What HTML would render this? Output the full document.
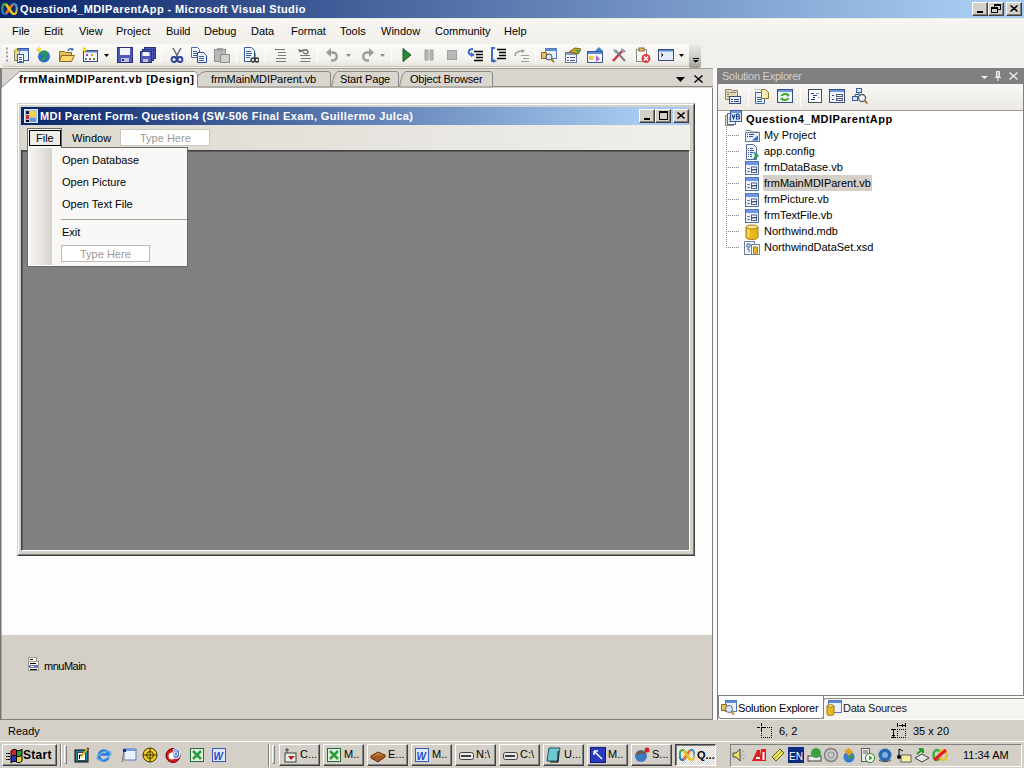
<!DOCTYPE html>
<html><head><meta charset="utf-8">
<style>
*{margin:0;padding:0;box-sizing:border-box}
html,body{width:1024px;height:768px;overflow:hidden;background:#d4d0c8;font-family:"Liberation Sans",sans-serif;font-size:11px;color:#000}
.a{position:absolute}
.nw{white-space:nowrap}
svg{position:absolute;overflow:visible}
#title{left:0;top:0;width:1024px;height:18px;background:linear-gradient(90deg,#0a246a 0px,#a6caf0 968px,#a6caf0 100%)}
#title .t{left:20px;top:3px;color:#fff;font-weight:bold;font-size:11px;letter-spacing:0.38px;white-space:nowrap}
.wb{position:absolute;width:16px;height:14px;background:#d4d0c8;border:1px solid;border-color:#fff #404040 #404040 #fff;box-shadow:inset -1px -1px #808080}
#menubar{left:0;top:18px;width:1024px;height:25px;background:linear-gradient(180deg,#f7f6f2 0%,#f0efea 100%);border-top:1px solid #e8eee0}
#menubar span{position:absolute;top:6px}
#toolbar{left:0;top:43px;width:1024px;height:25px;background:#f1f0ec}
#tb{left:2px;top:1px;width:698px;height:23px;background:linear-gradient(180deg,#fbfaf8 0%,#f3f2ee 70%,#e6e4dc 100%);border-radius:3px;border-bottom:1px solid #c8c6bc}
.sep{position:absolute;top:4px;width:1px;height:16px;background:#c5c2b8;border-right:1px solid #fff}
#tabs{left:0;top:68px;width:713px;height:20px}
.tab{position:absolute;top:3px;height:17px;background:#d9d6cf;border:1px solid #a09c94;border-bottom:none;border-radius:6px 2px 0 0;padding-left:13px;line-height:15px;white-space:nowrap}
#doc{left:0;top:88px;width:713px;height:547px;background:#fefefe;border-left:1px solid #727272;box-shadow:inset 1px 0 #b8b8b8;border-right:1px solid #808080}
#tray{left:0;top:635px;width:713px;height:85px;background:#d4d0c8;border-left:1px solid #727272;box-shadow:inset 1px 0 #a8a6a0;border-right:1px solid #808080;border-bottom:1px solid #808080}
#status{left:0;top:720px;width:1024px;height:21px;background:#d4d0c8}
#taskbar{left:0;top:741px;width:1024px;height:27px;background:#d4d0c8;border-top:1px solid #fff}
#gap{left:713px;top:68px;width:4px;height:652px;background:#fafafa}
#se{left:717px;top:68px;width:307px;height:652px;background:#fff;border-left:1px solid #808080;border-right:1px solid #808080}
#sehdr{left:-1px;top:0;width:307px;height:16px;background:#808080;color:#d4d0c8}
#setb{left:0;top:16px;width:305px;height:27px;background:linear-gradient(180deg,#f9f8f5,#ebe9e2);border-bottom:1px solid #a09c94}
.btn{background:#d4d0c8;border:1px solid;border-color:#fff #404040 #404040 #fff;box-shadow:inset -1px -1px #808080}
.tree span{position:absolute;white-space:nowrap}
</style></head><body>
<svg width="0" height="0" style="position:absolute">
<defs>
<symbol id="i-form" viewBox="0 0 16 16">
 <rect x="1.5" y="1.5" width="13" height="13" fill="#eef2fa" stroke="#5573ad"/>
 <rect x="2" y="2" width="12" height="3" fill="#6e9be6"/>
 <path d="M3.5 8.5h2M3.5 11.5h2" stroke="#3a4a70"/>
 <rect x="7.5" y="7" width="5" height="2.5" fill="#fff" stroke="#4a5a80"/>
 <rect x="7.5" y="10" width="5" height="2.5" fill="#fff" stroke="#4a5a80"/>
</symbol>
<symbol id="i-myproj" viewBox="0 0 16 16">
 <path d="M1.5 2.5h5l1 1.5h7v1" fill="none" stroke="#7a8090"/>
 <rect x="1.5" y="4.5" width="14" height="9" fill="#e6ecf6" stroke="#6a7690"/>
 <path d="M3 6.5h1M5 6.5h5M3 8.5h1M5 8.5h4" stroke="#3050a0"/>
 <path d="M8 12.5l6-5v5z" fill="#3a60c0"/>
</symbol>
<symbol id="i-config" viewBox="0 0 16 16">
 <path d="M2.5 0.5h7l3 3v12h-10z" fill="#f2f5fb" stroke="#5a6a9a"/>
 <path d="M4 4.5h1M6 4.5h3M4 6.5h1M6 6.5h4M4 8.5h1M6 8.5h3M4 10.5h1M6 10.5h2M4 12.5h1M6 12.5h2" stroke="#3a5aa0"/>
 <path d="M9 8h3l3 3.5-3 3.5h-3l2-3.5z" fill="#2a9a5a"/>
 <path d="M9.5 8.5h2l2.5 3" stroke="#5ac0e0" fill="none"/>
</symbol>
<symbol id="i-mdb" viewBox="0 0 16 16">
 <path d="M2 3v10c0 1.7 2.7 2.5 6 2.5s6-.8 6-2.5V3z" fill="#e8b820" stroke="#a07a10"/>
 <ellipse cx="8" cy="3" rx="6" ry="2" fill="#f8e890" stroke="#a07a10"/>
 <rect x="3" y="5" width="3" height="8" fill="#f5d860" opacity=".8"/>
</symbol>
<symbol id="i-xsd" viewBox="0 0 16 16">
 <rect x="0.5" y="1.5" width="10" height="13" fill="#f4f6fa" stroke="#7080a0"/>
 <path d="M3 4h3v3H3zM3 9h2v3" fill="none" stroke="#3060b0"/>
 <rect x="7.5" y="4.5" width="8" height="10" fill="#fff" stroke="#7080a0"/>
 <path d="M9.5 7v6c0 .8 1 1 2 1s2-.2 2-1V7z" fill="#e8b820" stroke="#a07a10"/>
</symbol>
<symbol id="i-vbproj" viewBox="0 0 17 16">
 <rect x="0.5" y="5.5" width="8" height="10" fill="#dcd8c8" stroke="#8a8878"/>
 <rect x="2.5" y="3.5" width="8" height="11" fill="#eef2fa" stroke="#5a6ea0"/>
 <path d="M4 7.5h4M4 9.5h4M4 11.5h4" stroke="#6a80b0"/>
 <rect x="5.5" y="0.5" width="11" height="11" fill="#dce8fa" stroke="#3a5a9a"/>
 <rect x="6" y="1" width="10" height="2" fill="#6a9ae0"/>
 <path d="M7 4.5l1.5 4 1.5-4" stroke="#1a3a8a" fill="none" stroke-width="1.2"/>
 <path d="M11.5 4v5h2c1.5 0 1.5-2.5 0-2.5h-2M11.5 6.5h1.8c1.2 0 1.2-2.5 0-2.5h-1.8" stroke="#1a3a8a" fill="none" stroke-width="1.1"/>
</symbol>
<symbol id="i-ql1" viewBox="0 0 16 16"><rect x="1" y="3" width="13" height="12" fill="#2a8a9a" stroke="#000"/><rect x="3.5" y="5.5" width="8" height="8" fill="#fff" stroke="#404040"/><path d="M5.5 12V8h3" stroke="#000" fill="none"/><path d="M7 10l7-9" stroke="#e8b020" stroke-width="2"/><path d="M13 1l2 1" stroke="#000"/></symbol>
<symbol id="i-ql2" viewBox="0 0 16 16"><path d="M12.5 10.5A5 5 0 1 1 12.8 7.5H4.5" fill="none" stroke="#2a7ad8" stroke-width="2.6"/><ellipse cx="8" cy="8.5" rx="7.5" ry="3.5" transform="rotate(-25 8 8.5)" fill="none" stroke="#5ab0f0" stroke-width="1.2"/></symbol>
<symbol id="i-ql3" viewBox="0 0 16 16"><rect x="3" y="2" width="12" height="11" fill="#e8f0fa" stroke="#5a7ac0"/><rect x="3" y="2" width="12" height="2" fill="#6a9ae0"/><path d="M3 4l-2 11" stroke="#a07040"/><rect x="2" y="2" width="3" height="3" fill="#2030a0"/></symbol>
<symbol id="i-ql4" viewBox="0 0 16 16"><circle cx="8" cy="8" r="7" fill="#f0d020" stroke="#403000"/><path d="M8 1v14M1 8h14" stroke="#403000"/><circle cx="8" cy="8" r="3.5" fill="none" stroke="#403000"/></symbol>
<symbol id="i-ql5" viewBox="0 0 16 16"><circle cx="8" cy="8.5" r="7" fill="#d81818" stroke="#600"/><circle cx="7" cy="9" r="3.5" fill="#fff"/><rect x="8" y="1.5" width="6.5" height="10" rx="3" fill="#4a7ad0" stroke="#fff"/><path d="M12.5 3.5c-2-1-3 1-3 3.5s3 3 3 0-2-2-3-1" stroke="#fff" fill="none"/></symbol>
<symbol id="i-ql6" viewBox="0 0 16 16"><rect x="1.5" y="1.5" width="13" height="13" fill="#e0f0e0" stroke="#2a6a3a"/><path d="M4 4l8 8M12 4l-8 8" stroke="#2a9a3a" stroke-width="2.5"/></symbol>
<symbol id="i-ql7" viewBox="0 0 16 16"><rect x="1.5" y="1.5" width="13" height="13" fill="#dde8fa" stroke="#3a5ac0"/><text x="2.5" y="12.5" font-size="10" font-family="Liberation Sans" font-weight="bold" font-style="italic" fill="#2a4ac0">W</text></symbol>
<symbol id="i-tk1" viewBox="0 0 16 16"><rect x="3" y="6" width="11" height="9" fill="#e0f0e0" stroke="#404040"/><path d="M5 1v5M3 3h4" stroke="#404040"/><path d="M6 9l3 4 4-4z" fill="#c02020"/></symbol>
<symbol id="i-tk3" viewBox="0 0 16 16"><path d="M1 9l7-4 7 3-7 5z" fill="#c87a30" stroke="#603010"/><path d="M1 9v2l7 4 7-5V8" fill="#a05a20" stroke="#603010"/></symbol>
<symbol id="i-tk5" viewBox="0 0 16 16"><rect x="1.5" y="5.5" width="14" height="7" rx="2" fill="#e8e8e8" stroke="#404040"/><rect x="3" y="8" width="10" height="2" fill="#404040"/></symbol>
<symbol id="i-tk7" viewBox="0 0 16 16"><path d="M3 1h11l-2 13H1z" fill="#70c8d0" stroke="#205060"/><path d="M12 4v11H4" stroke="#000" fill="none"/></symbol>
<symbol id="i-tk8" viewBox="0 0 16 16"><rect x="0.5" y="0.5" width="15" height="15" fill="#2a3ac0" stroke="#101a80"/><path d="M4 4l8 8M4 4h4M4 4v4" stroke="#fff" stroke-width="1.5" fill="none"/></symbol>
<symbol id="i-tk9" viewBox="0 0 16 16"><circle cx="7" cy="9" r="6" fill="#3a7ac0"/><path d="M3 8c2-4 6-4 8-1" stroke="#805020" stroke-width="2" fill="none"/><circle cx="13" cy="3" r="2.5" fill="#d02020"/></symbol>
<symbol id="i-tk10" viewBox="0 0 16 16"><ellipse cx="4.5" cy="8" rx="3.5" ry="5" fill="none" stroke="#30b040" stroke-width="2.5"/><ellipse cx="11.5" cy="8" rx="3.5" ry="5" fill="none" stroke="#2090e0" stroke-width="2.5"/><path d="M3 3l10 10M13 3L3 13" stroke="#ff8020" stroke-width="3"/></symbol>
<symbol id="i-tr1" viewBox="0 0 16 16"><path d="M2 6h3l4-4v12l-4-4H2z" fill="#f0e060" stroke="#404040"/><path d="M11 5l2-1M11 8h3M11 11l2 1" stroke="#a0a0a0"/></symbol>
<symbol id="i-tr2" viewBox="0 0 16 16"><path d="M1 14L6 3h3l2 11z" fill="#e02020"/><rect x="10" y="2" width="5" height="12" fill="#e02020"/><path d="M5 11h4" stroke="#fff" stroke-width="2"/><rect x="11.5" y="5" width="2" height="8" fill="#fff"/></symbol>
<symbol id="i-tr3" viewBox="0 0 16 16"><path d="M2 10l8-8 4 4-8 8z" fill="#f0e060" stroke="#606020"/><path d="M4 12l8-8" stroke="#a0a020"/></symbol>
<symbol id="i-tr4" viewBox="0 0 16 16"><rect x="0" y="0" width="16" height="16" fill="#0a2a80"/><text x="1" y="12.5" font-size="10" font-family="Liberation Sans" fill="#fff">EN</text></symbol>
<symbol id="i-tr5" viewBox="0 0 16 16"><rect x="1" y="9" width="13" height="5" fill="#e8e8e8" stroke="#404040"/><circle cx="9" cy="6" r="5" fill="#3aa040"/></symbol>
<symbol id="i-tr6" viewBox="0 0 16 16"><circle cx="8" cy="8" r="6.5" fill="#c8c8c8" stroke="#808080" stroke-width="1.5"/><circle cx="8" cy="8" r="3" fill="none" stroke="#909090"/></symbol>
<symbol id="i-tr7" viewBox="0 0 16 16"><circle cx="8" cy="10" r="5.5" fill="#3a7ad0"/><path d="M3 4l5-3 4 4-4 4z" fill="#e0a020"/><path d="M6 10h6" stroke="#30a030" stroke-width="2"/></symbol>
<symbol id="i-tr8" viewBox="0 0 16 16"><rect x="2.5" y="1.5" width="8" height="13" fill="#eaeaea" stroke="#606060"/><path d="M4 4h5M4 6h5" stroke="#606060"/><circle cx="11" cy="11" r="4.5" fill="#fff" stroke="#208020"/><path d="M10 8.5v5l3.5-2.5z" fill="#20a020"/></symbol>
<symbol id="i-tr9" viewBox="0 0 16 16"><circle cx="8" cy="8" r="6.5" fill="#2a6ab0"/><circle cx="8" cy="8" r="3" fill="#80b0e0"/><path d="M2 13c3 2 9 2 12 0" stroke="#404040" fill="none"/></symbol>
<symbol id="i-tr10" viewBox="0 0 16 16"><path d="M3 2v8M3 2l4 2" stroke="#000"/><rect x="5" y="8" width="10" height="7" fill="#f8f0a0" stroke="#606060"/><circle cx="3" cy="10" r="2" fill="#000"/></symbol>
<symbol id="i-tr11" viewBox="0 0 16 16"><path d="M1 11l7-4 7 4-7 4z" fill="#e8e8e8" stroke="#404040"/><path d="M3 7l6-5M9 2h-4M9 2v4" stroke="#20a020" stroke-width="2" fill="none"/></symbol>
<symbol id="i-tr12" viewBox="0 0 16 16"><ellipse cx="5" cy="8" rx="3.5" ry="5" fill="none" stroke="#30b040" stroke-width="2.5"/><ellipse cx="11" cy="8" rx="3.5" ry="5" fill="none" stroke="#e8c020" stroke-width="2.5"/><path d="M2 13L14 3" stroke="#e02020" stroke-width="3"/></symbol>
<symbol id="t-newproj" viewBox="0 0 16 16"><rect x="4.5" y="1.5" width="11" height="12" fill="#e8eef8" stroke="#3a5aa0"/><rect x="5" y="2" width="10" height="2" fill="#5a8ad8"/><rect x="1.5" y="3.5" width="5" height="10" fill="#e0d8b0" stroke="#8a8060"/><path d="M2 1l2 3M0 4h5M4 1L2 5" stroke="#f0d020"/><rect x="4.5" y="7.5" width="6" height="8" fill="#f4f8ff" stroke="#3a5aa0"/><path d="M6 10.5h3M6 12.5h3M6 14.5h3" stroke="#3a5aa0"/></symbol>
<symbol id="t-web" viewBox="0 0 16 16"><circle cx="9" cy="9.5" r="6" fill="#2a70c0"/><path d="M5 7c2-2 4 0 5 2s-2 3-3 4M9 4c2 1 3 2 2 4" stroke="#30a040" stroke-width="2" fill="none"/><path d="M1 3h6M4 0v6M2 1l4 4M6 1L2 5" stroke="#f0d020"/></symbol>
<symbol id="t-open" viewBox="0 0 16 16"><path d="M0.5 4.5h5l1 1h6v9h-12z" fill="#e8c060" stroke="#8a6a20"/><path d="M2.5 8.5h13l-3 6h-12z" fill="#f8d870" stroke="#8a6a20"/><path d="M9 4c1-3 4-3 5-1" stroke="#3a6ab0" stroke-width="1.5" fill="none"/><path d="M13 1l2 2-3 1z" fill="#3a6ab0"/></symbol>
<symbol id="t-additem" viewBox="0 0 16 16"><rect x="1.5" y="3.5" width="14" height="11" fill="#f4f6fb" stroke="#3a4a80"/><rect x="2" y="4" width="13" height="1.5" fill="#5a8ad8"/><rect x="4" y="7" width="2" height="2" fill="#a040c0"/><rect x="9" y="7" width="2" height="2" fill="#e0a020"/><rect x="3" y="11" width="2" height="2" fill="#2a8ad8"/><rect x="7" y="11" width="2" height="2" fill="#d04020"/><rect x="11" y="11" width="2" height="2" fill="#30a040"/><path d="M0 3h5M2.5 0v6M1 1l3 3M4 1L1 4" stroke="#f0d020"/></symbol>
<symbol id="t-save" viewBox="0 0 16 16"><rect x="0.5" y="0.5" width="15" height="15" fill="#5058b8" stroke="#2a307a"/><rect x="3" y="1" width="10" height="7" fill="#f0f2f8"/><rect x="4" y="11" width="8" height="4" fill="#c0c4e0"/><rect x="5" y="12" width="2" height="2" fill="#2a307a"/></symbol>
<symbol id="t-saveall" viewBox="0 0 16 16"><rect x="4.5" y="0.5" width="11" height="11" fill="#5058b8" stroke="#2a307a"/><rect x="2.5" y="2.5" width="11" height="11" fill="#5058b8" stroke="#2a307a"/><rect x="0.5" y="4.5" width="11" height="11" fill="#5058b8" stroke="#2a307a"/><rect x="2.5" y="5" width="7" height="4" fill="#f0f2f8"/><rect x="3" y="12" width="5" height="3" fill="#c0c4e0"/></symbol>
<symbol id="t-cut" viewBox="0 0 16 16"><path d="M4 1l5 9M12 1L7 10" stroke="#606878" stroke-width="1.5"/><circle cx="5" cy="12.5" r="2.5" fill="none" stroke="#2a40a0" stroke-width="1.8"/><circle cx="11" cy="12.5" r="2.5" fill="none" stroke="#2a40a0" stroke-width="1.8"/></symbol>
<symbol id="t-copy" viewBox="0 0 16 16"><path d="M0.5 0.5h6l2 2v8h-8z" fill="#f4f8ff" stroke="#4a6ab0"/><path d="M2 4.5h4M2 6.5h4M2 8.5h4" stroke="#3a5aa0"/><path d="M6.5 5.5h6l3 3v7h-9z" fill="#f4f8ff" stroke="#2a4a9a"/><path d="M8 9.5h5M8 11.5h5M8 13.5h5" stroke="#3a5aa0"/></symbol>
<symbol id="t-paste" viewBox="0 0 16 16"><rect x="0.5" y="2.5" width="11" height="12" fill="#b8b8b8" stroke="#909090"/><rect x="3" y="1" width="6" height="3" fill="#a0a0a0"/><rect x="6.5" y="7.5" width="9" height="8" fill="#d0d0d0" stroke="#909090"/></symbol>
<symbol id="t-find" viewBox="0 0 16 16"><path d="M1.5 0.5h7l3 3v11h-10z" fill="#f4f8ff" stroke="#3a5aa0"/><path d="M3 4.5h5M3 6.5h6M3 8.5h5M3 10.5h4" stroke="#3a5aa0"/><circle cx="10" cy="13" r="2" fill="#e0e0e0" stroke="#303030" stroke-width="1.3"/><circle cx="14" cy="13" r="2" fill="#e0e0e0" stroke="#303030" stroke-width="1.3"/><path d="M12 6v5" stroke="#303030"/></symbol>
<symbol id="t-comment" viewBox="0 0 16 16"><path d="M3 2.5h9M5 5.5h8M5 8.5h8M3 11.5h10M3 14.5h10" stroke="#7a7a7a"/><path d="M2 2.5h1" stroke="#404040"/></symbol>
<symbol id="t-uncomment" viewBox="0 0 16 16"><path d="M3 8.5h10M4 11.5h10M3 14.5h10" stroke="#7a7a7a"/><path d="M5 5c0-3 6-3 6 0s-4 2-5 0" stroke="#6a6a6a" stroke-width="1.3" fill="none"/><path d="M1 2l4 1-2 3z" fill="#6a6a6a"/></symbol>
<symbol id="t-undo" viewBox="0 0 16 16"><path d="M5 5.5h3c5 0 5 8 0 8H6" stroke="#9a9a9a" stroke-width="2.4" fill="none"/><path d="M1 5.5L6 1v9z" fill="#9a9a9a"/></symbol>
<symbol id="t-redo" viewBox="0 0 16 16"><path d="M11 5.5H8c-5 0-5 8 0 8h2" stroke="#9a9a9a" stroke-width="2.4" fill="none"/><path d="M15 5.5L10 1v9z" fill="#9a9a9a"/></symbol>
<symbol id="t-dd" viewBox="0 0 5 3"><path d="M0 0h5L2.5 3z" fill="#000"/></symbol>
<symbol id="t-ddg" viewBox="0 0 5 3"><path d="M0 0h5L2.5 3z" fill="#8a8a8a"/></symbol>
<symbol id="t-start" viewBox="0 0 16 16"><path d="M4 1.5l8 6.5-8 6.5z" fill="#2a8a3a" stroke="#1a5a22"/></symbol>
<symbol id="t-pause" viewBox="0 0 16 16"><rect x="4" y="3" width="3" height="10" fill="#b8b8b8" stroke="#a0a0a0"/><rect x="9" y="3" width="3" height="10" fill="#b8b8b8" stroke="#a0a0a0"/></symbol>
<symbol id="t-stop" viewBox="0 0 16 16"><rect x="3.5" y="3.5" width="9" height="9" fill="#b8b8b8" stroke="#a0a0a0"/></symbol>
<symbol id="t-stepinto" viewBox="0 0 16 16"><path d="M7 4.5h9M9 7.5h7M9 10.5h7M7 13.5h9" stroke="#000" stroke-width="1.3"/><path d="M6 2c-5 0-6 5-1 6" stroke="#3a6ad0" stroke-width="2" fill="none"/><path d="M4 5l4 3-4 2z" fill="#3a6ad0"/></symbol>
<symbol id="t-stepover" viewBox="0 0 16 16"><path d="M7 2.5h9M9 5.5h7M9 8.5h7M7 11.5h9" stroke="#000" stroke-width="1.3"/><path d="M5 1h-3v13h3" stroke="#3a6ad0" stroke-width="2" fill="none"/><path d="M3 12l4 2-4 2z" fill="#3a6ad0"/></symbol>
<symbol id="t-stepout" viewBox="0 0 16 16"><path d="M8 8.5h8M10 11.5h6M8 14.5h8" stroke="#9a9a9a"/><path d="M2 9c0-4 4-5 8-5" stroke="#9a9a9a" stroke-width="1.5" fill="none"/><path d="M9 2l3 2-3 2z" fill="#9a9a9a"/></symbol>
<symbol id="t-solexp" viewBox="0 0 16 16"><rect x="4.5" y="1.5" width="11" height="10" fill="#e8f0fa" stroke="#5a7ac0"/><rect x="5" y="2" width="10" height="2" fill="#5a8ad8"/><path d="M0.5 5.5h5v6h-5z" fill="#e8c060" stroke="#8a6a20"/><circle cx="8" cy="10" r="3" fill="#d8e8f8" stroke="#404a60"/><path d="M10 12l3 3" stroke="#a07a30" stroke-width="2"/></symbol>
<symbol id="t-props" viewBox="0 0 16 16"><rect x="0.5" y="5.5" width="11" height="10" fill="#f4f6fb" stroke="#6a7a9a"/><rect x="1" y="6" width="10" height="2" fill="#8a9ac0"/><path d="M2 10.5h2M5 10.5h5M2 13.5h2M5 13.5h5" stroke="#3a5aa0"/><path d="M4 5l6-4 6 1-3 5z" fill="#c8a030" stroke="#806010"/><path d="M10 3l6 0-2 4z" fill="#40a040"/></symbol>
<symbol id="t-objbr" viewBox="0 0 16 16"><rect x="0.5" y="4.5" width="15" height="11" fill="#f4f6fb" stroke="#3a5aa0"/><rect x="1" y="5" width="14" height="2" fill="#5a8ad8"/><path d="M2 9h5l-1 4H2z" fill="#f0d040"/><path d="M9 8l4 4-4 3z" fill="#c060d0"/><path d="M8 4l4-4 4 4" fill="#3a8ad0"/></symbol>
<symbol id="t-tools" viewBox="0 0 16 16"><path d="M2 14L12 3" stroke="#d03040" stroke-width="2.5"/><path d="M14 14L5 4" stroke="#7a7a7a" stroke-width="2"/><path d="M2 2l4 1 1 3-3 0z" fill="#8a9ab0"/><path d="M10 1l5 3-2 2-3-2z" fill="#8a9ab0"/></symbol>
<symbol id="t-errl" viewBox="0 0 16 16"><rect x="1.5" y="2.5" width="10" height="12" fill="#f8f8f8" stroke="#8a8a8a"/><rect x="4" y="1" width="5" height="3" fill="#e8c060" stroke="#8a6a20"/><circle cx="11" cy="11.5" r="4.5" fill="#e04040"/><path d="M9 9.5l4 4M13 9.5l-4 4" stroke="#fff" stroke-width="1.5"/></symbol>
<symbol id="t-cmd" viewBox="0 0 16 16"><rect x="0.5" y="2.5" width="15" height="11" fill="#e4ecf8" stroke="#3a4a80"/><rect x="1" y="3" width="14" height="1.5" fill="#5a8ad8"/><path d="M3 6.5l2 1.5-2 1.5" stroke="#000" fill="none"/></symbol>
<symbol id="s-props" viewBox="0 0 16 16"><path d="M0.5 1.5h6l1 1h5v9h-12z" fill="#e0d8b8" stroke="#8a8468"/><path d="M2 4.5h2M2 6.5h2M2 8.5h2M5 4.5h6" stroke="#8a8468"/><rect x="4.5" y="8.5" width="11" height="7" fill="#eef2fa" stroke="#3a4a80"/><path d="M6 11.5h2M9 11.5h5M6 13.5h2M9 13.5h5" stroke="#2a3a90"/></symbol>
<symbol id="s-showall" viewBox="0 0 16 16"><path d="M1.5 4.5h6l3 3v8h-9z" fill="#e8eefa" stroke="#4a6ab0"/><path d="M3 9.5h5M3 11.5h5M3 13.5h5" stroke="#3a5aa0"/><path d="M7.5 1.5h4l3 3v6h-7z" fill="#f8eab0" stroke="#8a7a30"/><path d="M1 1.5h1M3 1.5h1M5 1.5h1M1 3.5h1" stroke="#a0a0a0"/></symbol>
<symbol id="s-refresh" viewBox="0 0 16 16"><rect x="0.5" y="1.5" width="15" height="13" fill="#eef4fb" stroke="#3a4a80"/><rect x="1" y="2" width="14" height="2" fill="#6a9ae0"/><path d="M5 8c0-2 4-3 6-1M11 10c0 2-4 3-6 1" stroke="#40b020" stroke-width="2" fill="none"/><path d="M10 5l3 2-3 2zM6 13l-3-2 3-2z" fill="#40b020"/></symbol>
<symbol id="s-code" viewBox="0 0 16 16"><rect x="1.5" y="1.5" width="13" height="13" fill="#fff" stroke="#404a60"/><path d="M4 5.5h3M6 7.5h4M6 9.5h2M4 11.5h4" stroke="#2a3aa0" stroke-width="1.2"/><path d="M9 5.5h3M11 9.5h2" stroke="#a0a0a0"/></symbol>
<symbol id="s-designer" viewBox="0 0 16 16"><rect x="0.5" y="1.5" width="15" height="13" fill="#eef2fa" stroke="#3a4a80"/><rect x="1" y="2" width="14" height="2" fill="#6a9ae0"/><path d="M3 7.5h2M3 11.5h2" stroke="#3a4a70"/><rect x="7.5" y="6.5" width="6" height="2" fill="#fff" stroke="#4a5a80"/><rect x="7.5" y="10.5" width="6" height="2" fill="#fff" stroke="#4a5a80"/></symbol>
<symbol id="s-classdiag" viewBox="0 0 16 16"><rect x="4.5" y="0.5" width="5" height="4" fill="#d8e4f8" stroke="#3a5aa0"/><rect x="0.5" y="8.5" width="5" height="4" fill="#d8e4f8" stroke="#3a5aa0"/><path d="M7 4.5v2H3v2" stroke="#3a5aa0" fill="none"/><circle cx="10" cy="10" r="3.5" fill="#f0f4fa" stroke="#505a70" stroke-width="1.3"/><path d="M12.5 12.5l3 3" stroke="#b08030" stroke-width="2"/></symbol>
<symbol id="s-menu" viewBox="0 0 14 16"><rect x="2.5" y="1.5" width="8" height="4" fill="#fff" stroke="#9a9a8a"/><path d="M4 3.5h3" stroke="#000"/><rect x="2.5" y="5.5" width="10" height="9" fill="#fff" stroke="#9a9a8a"/><path d="M4 7.5h6" stroke="#000"/><rect x="3" y="9" width="9" height="3" fill="#6a78b8"/><path d="M5 10.5h3" stroke="#fff"/><path d="M4 13.5h7" stroke="#000"/></symbol>
<symbol id="s-seicon" viewBox="0 0 16 16"><rect x="4.5" y="0.5" width="11" height="11" fill="#e8f0fa" stroke="#5a7ac0"/><rect x="5" y="1" width="10" height="2" fill="#5a8ad8"/><path d="M0.5 4.5h5v6h-5z" fill="#e8c060" stroke="#8a6a20"/><circle cx="8" cy="9" r="3.5" fill="#d8e8f8" stroke="#5a6a80"/><path d="M10 11.5l3 3" stroke="#c0902a" stroke-width="2"/></symbol>
<symbol id="s-dsicon" viewBox="0 0 16 16"><rect x="2.5" y="0.5" width="13" height="12" fill="#e8f0fa" stroke="#5a7ac0"/><rect x="3" y="1" width="12" height="2" fill="#5a8ad8"/><path d="M1 6v8c0 1 2 1.5 3.5 1.5S8 15 8 14V6z" fill="#e8b820" stroke="#a07a10"/><ellipse cx="4.5" cy="6" rx="3.5" ry="1.3" fill="#f8e890" stroke="#a07a10"/></symbol>
<symbol id="vslogo" viewBox="0 0 16 12">
 <linearGradient id="lg1" x1="0" y1="0" x2="0" y2="1"><stop offset="0" stop-color="#3cc040"/><stop offset="1" stop-color="#2070d8"/></linearGradient>
 <linearGradient id="lg2" x1="0" y1="0" x2="0" y2="1"><stop offset="0" stop-color="#2a90e0"/><stop offset="1" stop-color="#f0d020"/></linearGradient>
 <path d="M8 6 C6 2 5 1 3.5 1 C1.5 1 0.8 3.5 0.8 6 C0.8 8.5 1.5 11 3.5 11 C5 11 6 10 8 6" fill="none" stroke="url(#lg1)" stroke-width="2.2"/>
 <path d="M8 6 C10 2 11 1 12.5 1 C14.5 1 15.2 3.5 15.2 6 C15.2 8.5 14.5 11 12.5 11 C11 11 10 10 8 6" fill="none" stroke="url(#lg2)" stroke-width="2.2"/>
 <path d="M4.5 10.5 L11 1.5" stroke="#f06a20" stroke-width="2.6"/>
 <path d="M4.5 1.5 L11 10.5" stroke="#f0c020" stroke-width="2.6"/>
</symbol>
</defs></svg>

<div id="title" class="a">
 <svg style="left:1px;top:3px" width="17" height="12"><use href="#vslogo"/></svg>
 <span class="a t">Question4_MDIParentApp - Microsoft Visual Studio</span>
 <div class="wb" style="left:972px;top:2px"><div class="a" style="left:4px;top:8px;width:6px;height:2px;background:#000"></div></div>
 <div class="wb" style="left:988px;top:2px"><div class="a" style="left:5px;top:1px;width:7px;height:6px;border:1px solid #000;border-top-width:2px"></div><div class="a" style="left:2px;top:4px;width:7px;height:6px;border:1px solid #000;border-top-width:2px;background:#d4d0c8"></div></div>
 <div class="wb" style="left:1006px;top:2px"><svg style="left:3px;top:2px" width="8" height="7"><path d="M0.5 0.5L7.5 6.5M7.5 0.5L0.5 6.5" stroke="#000" stroke-width="1.6"/></svg></div>
</div>
<div id="menubar" class="a">
<span style="left:12px">File</span><span style="left:44px">Edit</span><span style="left:79px">View</span><span style="left:116px">Project</span><span style="left:166px">Build</span><span style="left:204px">Debug</span><span style="left:251px">Data</span><span style="left:291px">Format</span><span style="left:340px">Tools</span><span style="left:381px">Window</span><span style="left:435px">Community</span><span style="left:504px">Help</span>
</div>
<div id="toolbar" class="a"><div id="tb" class="a"></div>
 <svg style="left:5px;top:4px" width="3" height="16"><path d="M1 1.5h2M1 5.5h2M1 9.5h2M1 13.5h2" stroke="#a0a0a0" stroke-width="2"/></svg>
 <svg style="left:13px;top:4px" width="16" height="16"><use href="#t-newproj"/></svg>
 <svg style="left:35px;top:4px" width="16" height="16"><use href="#t-web"/></svg>
 <svg style="left:59px;top:4px" width="16" height="16"><use href="#t-open"/></svg>
 <svg style="left:82px;top:4px" width="16" height="16"><use href="#t-additem"/></svg>
 <svg style="left:117px;top:4px" width="16" height="16"><use href="#t-save"/></svg>
 <svg style="left:140px;top:4px" width="16" height="16"><use href="#t-saveall"/></svg>
 <svg style="left:169px;top:4px" width="16" height="16"><use href="#t-cut"/></svg>
 <svg style="left:191px;top:4px" width="16" height="16"><use href="#t-copy"/></svg>
 <svg style="left:214px;top:4px" width="16" height="16"><use href="#t-paste"/></svg>
 <svg style="left:243px;top:4px" width="16" height="16"><use href="#t-find"/></svg>
 <svg style="left:273px;top:4px" width="16" height="16"><use href="#t-comment"/></svg>
 <svg style="left:297px;top:4px" width="16" height="16"><use href="#t-uncomment"/></svg>
 <svg style="left:325px;top:4px" width="16" height="16"><use href="#t-undo"/></svg>
 <svg style="left:359px;top:4px" width="16" height="16"><use href="#t-redo"/></svg>
 <svg style="left:399px;top:4px" width="16" height="16"><use href="#t-start"/></svg>
 <svg style="left:421px;top:4px" width="16" height="16"><use href="#t-pause"/></svg>
 <svg style="left:444px;top:4px" width="16" height="16"><use href="#t-stop"/></svg>
 <svg style="left:467px;top:4px" width="16" height="16"><use href="#t-stepinto"/></svg>
 <svg style="left:490px;top:4px" width="16" height="16"><use href="#t-stepover"/></svg>
 <svg style="left:513px;top:4px" width="16" height="16"><use href="#t-stepout"/></svg>
 <svg style="left:541px;top:4px" width="16" height="16"><use href="#t-solexp"/></svg>
 <svg style="left:565px;top:4px" width="16" height="16"><use href="#t-props"/></svg>
 <svg style="left:587px;top:4px" width="16" height="16"><use href="#t-objbr"/></svg>
 <svg style="left:611px;top:4px" width="16" height="16"><use href="#t-tools"/></svg>
 <svg style="left:635px;top:4px" width="16" height="16"><use href="#t-errl"/></svg>
 <svg style="left:658px;top:4px" width="16" height="16"><use href="#t-cmd"/></svg>
 <svg style="left:104px;top:11px" width="5" height="3"><use href="#t-dd"/></svg>
 <svg style="left:679px;top:11px" width="5" height="3"><use href="#t-dd"/></svg>
 <svg style="left:346px;top:11px" width="5" height="3"><use href="#t-ddg"/></svg>
 <svg style="left:380px;top:11px" width="5" height="3"><use href="#t-ddg"/></svg>
 <div class="sep" style="left:161px"></div>
 <div class="sep" style="left:236px"></div>
 <div class="sep" style="left:265px"></div>
 <div class="sep" style="left:317px"></div>
 <div class="sep" style="left:391px"></div>
 <div class="sep" style="left:535px"></div>
 <div class="a" style="left:689px;top:1px;width:12px;height:24px;border-radius:2px 3px 3px 2px;background:linear-gradient(180deg,#ecebe7 0%,#cfcec9 50%,#9c9b96 100%)"></div>
 <svg style="left:692px;top:14px" width="8" height="8"><path d="M1 1.5h6" stroke="#000"/><path d="M1 3h6L4 6z" fill="#000"/><path d="M4 6.5l2-2" stroke="#fff"/></svg>
</div>
<div id="tabs" class="a">
 <svg style="left:0;top:0" width="713" height="20">
  <rect x="0" y="0" width="713" height="20" fill="#d8d5ce"/>
  <rect x="0" y="0" width="713" height="1" fill="#a19e96"/>
  <rect x="0" y="18" width="713" height="1" fill="#8c8a84"/>
  <path d="M331.5 19 C333 12 334 5 338 3.5 L396 3.5 Q398.5 3.5 398.5 6 L398.5 19 Z" fill="#d9d6cf" stroke="#8c8a84"/>
  <path d="M399.5 19 C401 12 402 5 406 3.5 L490 3.5 Q492.5 3.5 492.5 6 L492.5 19 Z" fill="#d9d6cf" stroke="#8c8a84"/>
  <path d="M197.5 19 L197.5 9 C200 5 203 3.5 208 3.5 L328 3.5 Q330.5 3.5 330.5 6 L330.5 19 Z" fill="#d9d6cf" stroke="#8c8a84"/>
  <path d="M1 20 L19 3.5 L195 3.5 L197.5 6 L197.5 20 L1 20Z" fill="#fefefe"/>
  <path d="M1.5 19.5 L19.5 3.5 L195 3.5 L197.5 6 L197.5 19" fill="none" stroke="#8c8a84"/>
  <rect x="0" y="0" width="2" height="20" fill="#808080"/>
 </svg>
 <span class="a nw" style="left:19px;top:5px;font-weight:bold;letter-spacing:0.55px">frmMainMDIParent.vb [Design]</span>
 <span class="a nw" style="left:211px;top:5px;letter-spacing:-0.1px">frmMainMDIParent.vb</span>
 <span class="a nw" style="left:340px;top:5px;letter-spacing:-0.2px">Start Page</span>
 <span class="a nw" style="left:410px;top:5px;letter-spacing:-0.2px">Object Browser</span>
 <svg style="left:676px;top:9px" width="9" height="5"><path d="M0 0H9L4.5 5Z" fill="#000"/></svg>
 <svg style="left:694px;top:7px" width="9" height="8"><path d="M0.5 0.5L8.5 7.5M8.5 0.5L0.5 7.5" stroke="#000" stroke-width="1.5"/></svg>
</div>
<div id="doc" class="a">
 <div class="a" style="left:16px;top:15px;width:678px;height:453px;background:#d4d0c8;border:1px solid;border-color:#d4d0c8 #404040 #404040 #d4d0c8">
  <div class="a" style="left:0;top:0;width:676px;height:451px;border:1px solid;border-color:#fff #808080 #808080 #fff"></div>
  <div class="a" style="left:3px;top:3px;width:669px;height:18px;background:linear-gradient(90deg,#0a246a 0px,#a6caf0 616px,#a6caf0 100%)">
   <svg style="left:3px;top:2px" width="14" height="14" viewBox="0 0 14 14"><rect x="0.5" y="0.5" width="13" height="13" fill="#a9c6ee" stroke="#d8e6f8"/><rect x="2" y="2" width="3" height="3" fill="#102040"/><rect x="2" y="6" width="3" height="4" fill="#c8332a"/><rect x="2" y="11" width="3" height="2" fill="#000"/><rect x="6" y="2" width="6" height="6" fill="#f3d23a"/><rect x="6" y="9" width="6" height="4" fill="#6c8fe0"/></svg>
   <span class="a nw" style="left:19px;top:3px;color:#fff;font-weight:bold;letter-spacing:0.4px">MDI Parent Form- Question4 (SW-506 Final Exam, Guillermo Julca)</span>
   <div class="wb" style="left:618px;top:2px"><div class="a" style="left:4px;top:8px;width:6px;height:2px;background:#000"></div></div>
   <div class="wb" style="left:634px;top:2px"><div class="a" style="left:3px;top:1px;width:9px;height:9px;border:1px solid #000;border-top-width:2px"></div></div>
   <div class="wb" style="left:652px;top:2px"><svg style="left:3px;top:2px" width="8" height="7"><path d="M0.5 0.5L7.5 6.5M7.5 0.5L0.5 6.5" stroke="#000" stroke-width="1.6"/></svg></div>
  </div>
  <div class="a" style="left:3px;top:21px;width:669px;height:26px;background:linear-gradient(90deg,#dcd9d0 0%,#e3e0d9 35%,#eae8e3 70%,#f0efeb 100%)">
   <div class="a" style="left:6px;top:3px;width:35px;height:20px;background:#f8f7f4;border:1px solid #6a6862;border-bottom:none"></div>
   <div class="a" style="left:8px;top:5px;width:32px;height:16px;background:#eeede8;border:1px solid #000"></div>
   <span class="a nw" style="left:15px;top:7px">File</span>
   <span class="a nw" style="left:51px;top:7px">Window</span>
   <div class="a" style="left:99px;top:4px;width:90px;height:17px;background:#fff;border:1px solid #cac7bf"></div>
   <span class="a nw" style="left:119px;top:7px;color:#9c9a95">Type Here</span>
  </div>
  <div class="a" style="left:3px;top:46px;width:669px;height:401px;background:#808080;border-top:1px solid #404040;border-left:1px solid #404040;border-right:1px solid #fff;border-bottom:1px solid #fff;box-shadow:1px 1px 0 #d4d0c8,inset 1px 1px 0 #5c5c5c"></div>
 </div>
 <div class="a" style="left:26px;top:59px;width:161px;height:120px;background:#f9f8f6;border:1px solid #6a6862">
  <div class="a" style="left:0;top:-1px;width:33px;height:1px;background:#f8f7f4"></div>
  <div class="a" style="left:0;top:0;width:24px;height:118px;background:linear-gradient(90deg,#f6f5f2 0%,#e8e6df 50%,#d3d1c8 100%);border-left:1px solid #fff;border-bottom:1px solid #fff"></div>
  <span class="a nw" style="left:34px;top:6px">Open Database</span>
  <span class="a nw" style="left:34px;top:28px">Open Picture</span>
  <span class="a nw" style="left:34px;top:50px">Open Text File</span>
  <div class="a" style="left:33px;top:71px;width:126px;height:1px;background:#a5a29a"></div>
  <span class="a nw" style="left:34px;top:78px">Exit</span>
  <div class="a" style="left:33px;top:97px;width:89px;height:17px;background:#fff;border:1px solid #bcbab3"></div>
  <span class="a nw" style="left:52px;top:100px;color:#9c9a95">Type Here</span>
 </div>
</div>
<div id="tray" class="a">
 <svg style="left:25px;top:21px" width="14" height="16"><use href="#s-menu"/></svg>
 <span class="a nw" style="left:43px;top:25px;letter-spacing:-0.5px">mnuMain</span>
</div>
<div id="gap" class="a"></div>
<div id="se" class="a">
 <div id="sehdr" class="a"><span class="a nw" style="left:5px;top:2px;letter-spacing:-0.25px">Solution Explorer</span>
  <svg style="left:264px;top:8px" width="7" height="3"><path d="M0 0h7L3.5 3z" fill="#f0f0f0"/></svg>
  <svg style="left:277px;top:3px" width="8" height="10"><path d="M2.5 0.5h3v5h-3zM1 6.5h6M4 7v3" stroke="#f0f0f0" fill="none"/><path d="M4 1v4" stroke="#f0f0f0"/></svg>
  <svg style="left:292px;top:4px" width="9" height="8"><path d="M0.5 0.5L8.5 7.5M8.5 0.5L0.5 7.5" stroke="#f0f0f0" stroke-width="1.3"/></svg>
 </div>
 <div id="setb" class="a">
  <svg style="left:7px;top:4px" width="16" height="16"><use href="#s-props"/></svg>
  <div class="sep" style="left:30px;top:4px;height:18px"></div>
  <svg style="left:36px;top:4px" width="16" height="16"><use href="#s-showall"/></svg>
  <svg style="left:59px;top:4px" width="16" height="16"><use href="#s-refresh"/></svg>
  <div class="sep" style="left:82px;top:4px;height:18px"></div>
  <svg style="left:89px;top:4px" width="16" height="16"><use href="#s-code"/></svg>
  <svg style="left:111px;top:4px" width="16" height="16"><use href="#s-designer"/></svg>
  <svg style="left:134px;top:4px" width="16" height="16"><use href="#s-classdiag"/></svg>
 </div>
 <div class="a" style="left:0;top:627px;width:305px;height:1px;background:#808080"></div>
 <div class="a" style="left:0;top:628px;width:306px;height:24px;background:#fcfcfb"></div>
 <div class="a" style="left:105px;top:630px;width:201px;height:21px;background:#f6f5f2;border-top:1px solid #8c8a84;border-left:1px solid #8c8a84;border-radius:3px 0 0 0"></div>
 <div class="a" style="left:0px;top:628px;width:106px;height:23px;background:#fff;border:1px solid #808080;border-top:none;border-radius:0 0 3px 3px"></div>
 <svg style="left:3px;top:632px" width="16" height="16"><use href="#s-seicon"/></svg>
 <span class="a nw" style="left:20px;top:634px;letter-spacing:-0.2px">Solution Explorer</span>
 <svg style="left:108px;top:632px" width="16" height="16"><use href="#s-dsicon"/></svg>
 <span class="a nw" style="left:125px;top:634px;color:#202020;letter-spacing:-0.25px">Data Sources</span>
 <div class="tree">
  <svg style="left:8px;top:59px" width="1" height="121"><line x1="0.5" y1="0" x2="0.5" y2="121" stroke="#808080" stroke-dasharray="1 1"/></svg>
  <svg style="left:10px;top:67px" width="12" height="1"><line x1="0" y1="0.5" x2="12" y2="0.5" stroke="#808080" stroke-dasharray="1 1"/></svg>
  <svg style="left:26px;top:60px" width="16" height="16"><use href="#i-myproj"/></svg>
  <span style="left:46px;top:61px">My Project</span>
  <svg style="left:10px;top:83px" width="12" height="1"><line x1="0" y1="0.5" x2="12" y2="0.5" stroke="#808080" stroke-dasharray="1 1"/></svg>
  <svg style="left:26px;top:76px" width="16" height="16"><use href="#i-config"/></svg>
  <span style="left:46px;top:77px">app.config</span>
  <svg style="left:10px;top:99px" width="12" height="1"><line x1="0" y1="0.5" x2="12" y2="0.5" stroke="#808080" stroke-dasharray="1 1"/></svg>
  <svg style="left:26px;top:92px" width="16" height="16"><use href="#i-form"/></svg>
  <span style="left:46px;top:93px">frmDataBase.vb</span>
  <svg style="left:10px;top:115px" width="12" height="1"><line x1="0" y1="0.5" x2="12" y2="0.5" stroke="#808080" stroke-dasharray="1 1"/></svg>
  <div class="a" style="left:45px;top:107px;width:109px;height:16px;background:#d4d0c8"></div>
  <svg style="left:26px;top:108px" width="16" height="16"><use href="#i-form"/></svg>
  <span style="left:46px;top:109px">frmMainMDIParent.vb</span>
  <svg style="left:10px;top:131px" width="12" height="1"><line x1="0" y1="0.5" x2="12" y2="0.5" stroke="#808080" stroke-dasharray="1 1"/></svg>
  <svg style="left:26px;top:124px" width="16" height="16"><use href="#i-form"/></svg>
  <span style="left:46px;top:125px">frmPicture.vb</span>
  <svg style="left:10px;top:147px" width="12" height="1"><line x1="0" y1="0.5" x2="12" y2="0.5" stroke="#808080" stroke-dasharray="1 1"/></svg>
  <svg style="left:26px;top:140px" width="16" height="16"><use href="#i-form"/></svg>
  <span style="left:46px;top:141px">frmTextFile.vb</span>
  <svg style="left:10px;top:163px" width="12" height="1"><line x1="0" y1="0.5" x2="12" y2="0.5" stroke="#808080" stroke-dasharray="1 1"/></svg>
  <svg style="left:26px;top:156px" width="16" height="16"><use href="#i-mdb"/></svg>
  <span style="left:46px;top:157px">Northwind.mdb</span>
  <svg style="left:10px;top:179px" width="12" height="1"><line x1="0" y1="0.5" x2="12" y2="0.5" stroke="#808080" stroke-dasharray="1 1"/></svg>
  <svg style="left:26px;top:172px" width="16" height="16"><use href="#i-xsd"/></svg>
  <span style="left:46px;top:173px">NorthwindDataSet.xsd</span>
  <svg style="left:7px;top:42px" width="17" height="16"><use href="#i-vbproj"/></svg>
  <span style="left:28px;top:45px;font-weight:bold;letter-spacing:0.5px">Question4_MDIParentApp</span>
 </div>
</div>
<div id="status" class="a"><span class="a" style="left:8px;top:5px">Ready</span>
 <svg style="left:757px;top:3px" width="16" height="16"><path d="M4 4h1v1h-1zM4 6h1v1h-1zM4 8h1v1h-1zM4 10h1v1h-1zM4 12h1v1h-1zM4 14h1v1h-1zM6 4h1v1h-1zM6 14h1v1h-1zM8 4h1v1h-1zM8 14h1v1h-1zM10 4h1v1h-1zM10 14h1v1h-1zM12 4h1v1h-1zM12 14h1v1h-1zM14 4h1v1h-1zM14 6h1v1h-1zM14 8h1v1h-1zM14 10h1v1h-1zM14 12h1v1h-1zM14 14h1v1h-1z" fill="#000"/><path d="M0 4h3v1H0zM5 4h3v1H5zM4 0h1v3H4zM4 5h1v3H4z" fill="#000"/></svg>
 <span class="a nw" style="left:779px;top:5px">6, 2</span>
 <svg style="left:887px;top:3px" width="20" height="17"><path d="M10 6h1v1h-1zM10 8h1v1h-1zM10 10h1v1h-1zM10 12h1v1h-1zM10 14h1v1h-1zM12 6h1v1h-1zM12 14h1v1h-1zM14 6h1v1h-1zM14 14h1v1h-1zM16 6h1v1h-1zM16 14h1v1h-1zM18 6h1v1h-1zM18 8h1v1h-1zM18 10h1v1h-1zM18 12h1v1h-1zM18 14h1v1h-1z" fill="#000"/><path d="M10 0h1v4h-1zM18 0h1v4h-1zM12 2h6v1h-6zM15 1h1v1h-1zM15 3h1v1h-1zM4 6h5v1H4zM4 14h5v1H4zM6 7h1v7H6zM5 12h1v1H5zM7 12h1v1H7z" fill="#000"/></svg>
 <span class="a nw" style="left:913px;top:5px">35 x 20</span>
</div>
<div id="taskbar" class="a">
 <div class="a btn" style="left:2px;top:2px;width:55px;height:22px"></div>
 <svg style="left:5px;top:5px" width="18" height="16" viewBox="0 0 18 16">
  <path d="M1 6.5h1M3 6.5h2M1 9.5h1M3 9.5h2M1 12.5h1M3 12.5h2" stroke="#000"/>
  <path d="M2 6.5h1M2 9.5h1" stroke="#e02020"/><path d="M2 12.5h1M5 11h1" stroke="#2040e0"/>
  <path d="M6 4 C8 2 10 2 11.5 3 L11.5 9 C10 8 8 8 6 10 Z" fill="#d02828" stroke="#000" stroke-width="1"/>
  <path d="M6 10 C8 8 10 8 11.5 9 L11.5 15 C10 14 8 14 6 16 Z" fill="#2838b8" stroke="#000" stroke-width="1"/>
  <path d="M11.5 3 C13 4 15 4 17 2 L17 8 C15 10 13 10 11.5 9 Z" fill="#28a028" stroke="#000" stroke-width="1"/>
  <path d="M11.5 9 C13 10 15 10 17 8 L17 14 C15 16 13 16 11.5 15 Z" fill="#e8d830" stroke="#000" stroke-width="1"/>
 </svg>
 <span class="a nw" style="left:23px;top:6px;font-weight:bold;font-size:12px;letter-spacing:0.3px">Start</span>
 <div class="a" style="left:60px;top:2px;width:2px;height:23px;border-left:1px solid #808080;border-right:1px solid #fff"></div>
 <div class="a" style="left:64px;top:3px;width:3px;height:19px;border:1px solid;border-color:#fff #808080 #808080 #fff"></div>
 <div class="a" style="left:268px;top:2px;width:2px;height:23px;border-left:1px solid #808080;border-right:1px solid #fff"></div>
 <div class="a" style="left:272px;top:3px;width:3px;height:19px;border:1px solid;border-color:#fff #808080 #808080 #fff"></div>
 <svg style="left:74px;top:5px" width="16" height="16"><use href="#i-ql1"/></svg>
 <svg style="left:96px;top:5px" width="16" height="16"><use href="#i-ql2"/></svg>
 <svg style="left:121px;top:5px" width="16" height="16"><use href="#i-ql3"/></svg>
 <svg style="left:142px;top:5px" width="16" height="16"><use href="#i-ql4"/></svg>
 <svg style="left:165px;top:5px" width="16" height="16"><use href="#i-ql5"/></svg>
 <svg style="left:189px;top:5px" width="16" height="16"><use href="#i-ql6"/></svg>
 <svg style="left:211px;top:5px" width="16" height="16"><use href="#i-ql7"/></svg>
 <div class="a btn" style="left:279px;top:2px;width:41px;height:22px"></div>
 <svg style="left:282px;top:5px" width="16" height="16"><use href="#i-tk1"/></svg>
 <span class="a nw" style="left:300px;top:6px">C...</span>
 <div class="a btn" style="left:323px;top:2px;width:41px;height:22px"></div>
 <svg style="left:326px;top:5px" width="16" height="16"><use href="#i-ql6"/></svg>
 <span class="a nw" style="left:344px;top:6px">M..</span>
 <div class="a btn" style="left:367px;top:2px;width:41px;height:22px"></div>
 <svg style="left:370px;top:5px" width="16" height="16"><use href="#i-tk3"/></svg>
 <span class="a nw" style="left:388px;top:6px">E...</span>
 <div class="a btn" style="left:411px;top:2px;width:41px;height:22px"></div>
 <svg style="left:414px;top:5px" width="16" height="16"><use href="#i-ql7"/></svg>
 <span class="a nw" style="left:432px;top:6px">M..</span>
 <div class="a btn" style="left:455px;top:2px;width:41px;height:22px"></div>
 <svg style="left:458px;top:5px" width="16" height="16"><use href="#i-tk5"/></svg>
 <span class="a nw" style="left:476px;top:6px">N:\</span>
 <div class="a btn" style="left:499px;top:2px;width:41px;height:22px"></div>
 <svg style="left:502px;top:5px" width="16" height="16"><use href="#i-tk5"/></svg>
 <span class="a nw" style="left:520px;top:6px">C:\</span>
 <div class="a btn" style="left:543px;top:2px;width:41px;height:22px"></div>
 <svg style="left:546px;top:5px" width="16" height="16"><use href="#i-tk7"/></svg>
 <span class="a nw" style="left:564px;top:6px">U...</span>
 <div class="a btn" style="left:587px;top:2px;width:41px;height:22px"></div>
 <svg style="left:590px;top:5px" width="16" height="16"><use href="#i-tk8"/></svg>
 <span class="a nw" style="left:608px;top:6px">M..</span>
 <div class="a btn" style="left:631px;top:2px;width:41px;height:22px"></div>
 <svg style="left:634px;top:5px" width="16" height="16"><use href="#i-tk9"/></svg>
 <span class="a nw" style="left:652px;top:6px">S...</span>
 <div class="a" style="left:675px;top:2px;width:41px;height:22px;background:repeating-conic-gradient(#fff 0 25%,#d4d0c8 0 50%) 0 0/2px 2px;border:1px solid;border-color:#404040 #fff #fff #404040;box-shadow:inset 1px 1px #808080"></div>
 <svg style="left:679px;top:7px" width="16" height="12"><use href="#vslogo"/></svg>
 <span class="a nw" style="left:697px;top:7px;font-weight:bold">Q...</span>
 <div class="a" style="left:730px;top:2px;width:292px;height:23px;border:1px solid;border-color:#808080 #fff #fff #808080"></div>
 <svg style="left:731px;top:5px" width="16" height="16"><use href="#i-tr1"/></svg>
 <svg style="left:751px;top:5px" width="16" height="16"><use href="#i-tr2"/></svg>
 <svg style="left:770px;top:5px" width="16" height="16"><use href="#i-tr3"/></svg>
 <svg style="left:788px;top:5px" width="16" height="16"><use href="#i-tr4"/></svg>
 <svg style="left:807px;top:5px" width="16" height="16"><use href="#i-tr5"/></svg>
 <svg style="left:823px;top:5px" width="16" height="16"><use href="#i-tr6"/></svg>
 <svg style="left:841px;top:5px" width="16" height="16"><use href="#i-tr7"/></svg>
 <svg style="left:859px;top:5px" width="16" height="16"><use href="#i-tr8"/></svg>
 <svg style="left:877px;top:5px" width="16" height="16"><use href="#i-tr9"/></svg>
 <svg style="left:896px;top:5px" width="16" height="16"><use href="#i-tr10"/></svg>
 <svg style="left:914px;top:5px" width="16" height="16"><use href="#i-tr11"/></svg>
 <svg style="left:932px;top:5px" width="16" height="16"><use href="#i-tr12"/></svg>
 <span class="a nw" style="left:963px;top:7px">11:34 AM</span>
</div>
</body></html>
